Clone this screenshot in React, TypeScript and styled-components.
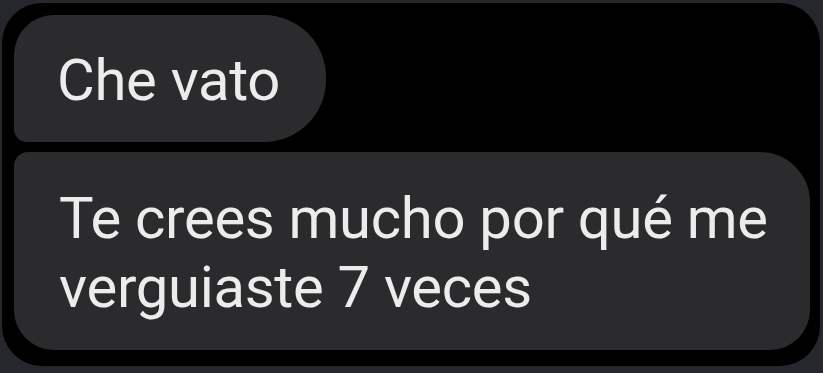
import React from "react";
import styled, { createGlobalStyle } from "styled-components";

const Global = createGlobalStyle`
  html, body {
    margin: 0;
    padding: 0;
    background: #26272c;
  }
  body {
    font-family: Roboto, "Noto Sans", "Liberation Sans", sans-serif;
  }
`;

const Frame = styled.div`
  margin: 3px 3px 7px 2px;
  height: 363px;
  box-sizing: border-box;
  background: #000;
  border-radius: 40px;
  padding: 12px 10px 16px 12px;
  display: flex;
  flex-direction: column;
  align-items: flex-start;
  gap: 10px;
`;

const Bubble = styled.div<{ $radius: string; $wide?: boolean }>`
  box-sizing: border-box;
  background: #2b2b2d;
  color: #ececec;
  font-size: 58px;
  line-height: 69px;
  letter-spacing: -0.3px;
  border-radius: ${(p) => p.$radius};
  padding: 31px 46px 27px 43px;
  ${(p) => (p.$wide ? "align-self: stretch; padding: 32px 30px 28px 45px;" : "")}
`;

export default function App() {
  return (
    <>
      <Global />
      <Frame>
        <Bubble $radius="40px 62px 62px 13px">Che vato</Bubble>
        <Bubble $radius="14px 50px 40px 40px" $wide>
          Te crees mucho por qué me
          <br />
          verguiaste 7 veces
        </Bubble>
      </Frame>
    </>
  );
}
